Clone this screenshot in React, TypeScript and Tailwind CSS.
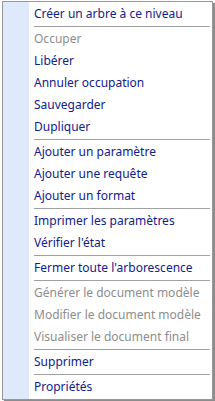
import React from 'react';

type Entry = { label: string; disabled?: boolean } | 'sep';

const entries: Entry[] = [
  { label: 'Créer un arbre à ce niveau' },
  'sep',
  { label: 'Occuper', disabled: true },
  { label: 'Libérer' },
  { label: 'Annuler occupation' },
  { label: 'Sauvegarder' },
  { label: 'Dupliquer' },
  'sep',
  { label: 'Ajouter un paramètre' },
  { label: 'Ajouter une requête' },
  { label: 'Ajouter un format' },
  'sep',
  { label: 'Imprimer les paramètres' },
  { label: "Vérifier l'état" },
  'sep',
  { label: "Fermer toute l'arborescence" },
  'sep',
  { label: 'Générer le document modèle', disabled: true },
  { label: 'Modifier le document modèle', disabled: true },
  { label: 'Visualiser le document final', disabled: true },
  'sep',
  { label: 'Supprimer' },
  'sep',
  { label: 'Propriétés' }
];

const MenuItem = ({ label, disabled }: { label: string; disabled?: boolean }) => (
  <div
    className={`flex h-[22px] items-center pl-[31px] text-[12px] leading-none whitespace-nowrap ${
      disabled ? 'text-[#8d8d8d]' : 'text-[#10218b]'
    }`}>
    {label}
  </div>
);

const Separator = () => (
  <div className="flex h-[3px] items-center pl-[31px] pr-[2px]">
    <div className="h-px w-full bg-[#a0a0a0]" />
  </div>
);

export default function App() {
  return (
    <div className="h-[401px] w-[215px] overflow-hidden bg-white font-['Noto_Sans',sans-serif]">
      <div className="ml-[2px] mt-px w-[211px] border border-[#979797] bg-[linear-gradient(to_right,#deeafb_26px,#ffffff_26px)] pt-px pb-px shadow-[2px_2px_1px_rgba(0,0,0,0.45)]">
        {entries.map((e, i) => (e === 'sep' ? <Separator key={i} /> : <MenuItem key={i} {...e} />))}
      </div>
    </div>
  );
}
